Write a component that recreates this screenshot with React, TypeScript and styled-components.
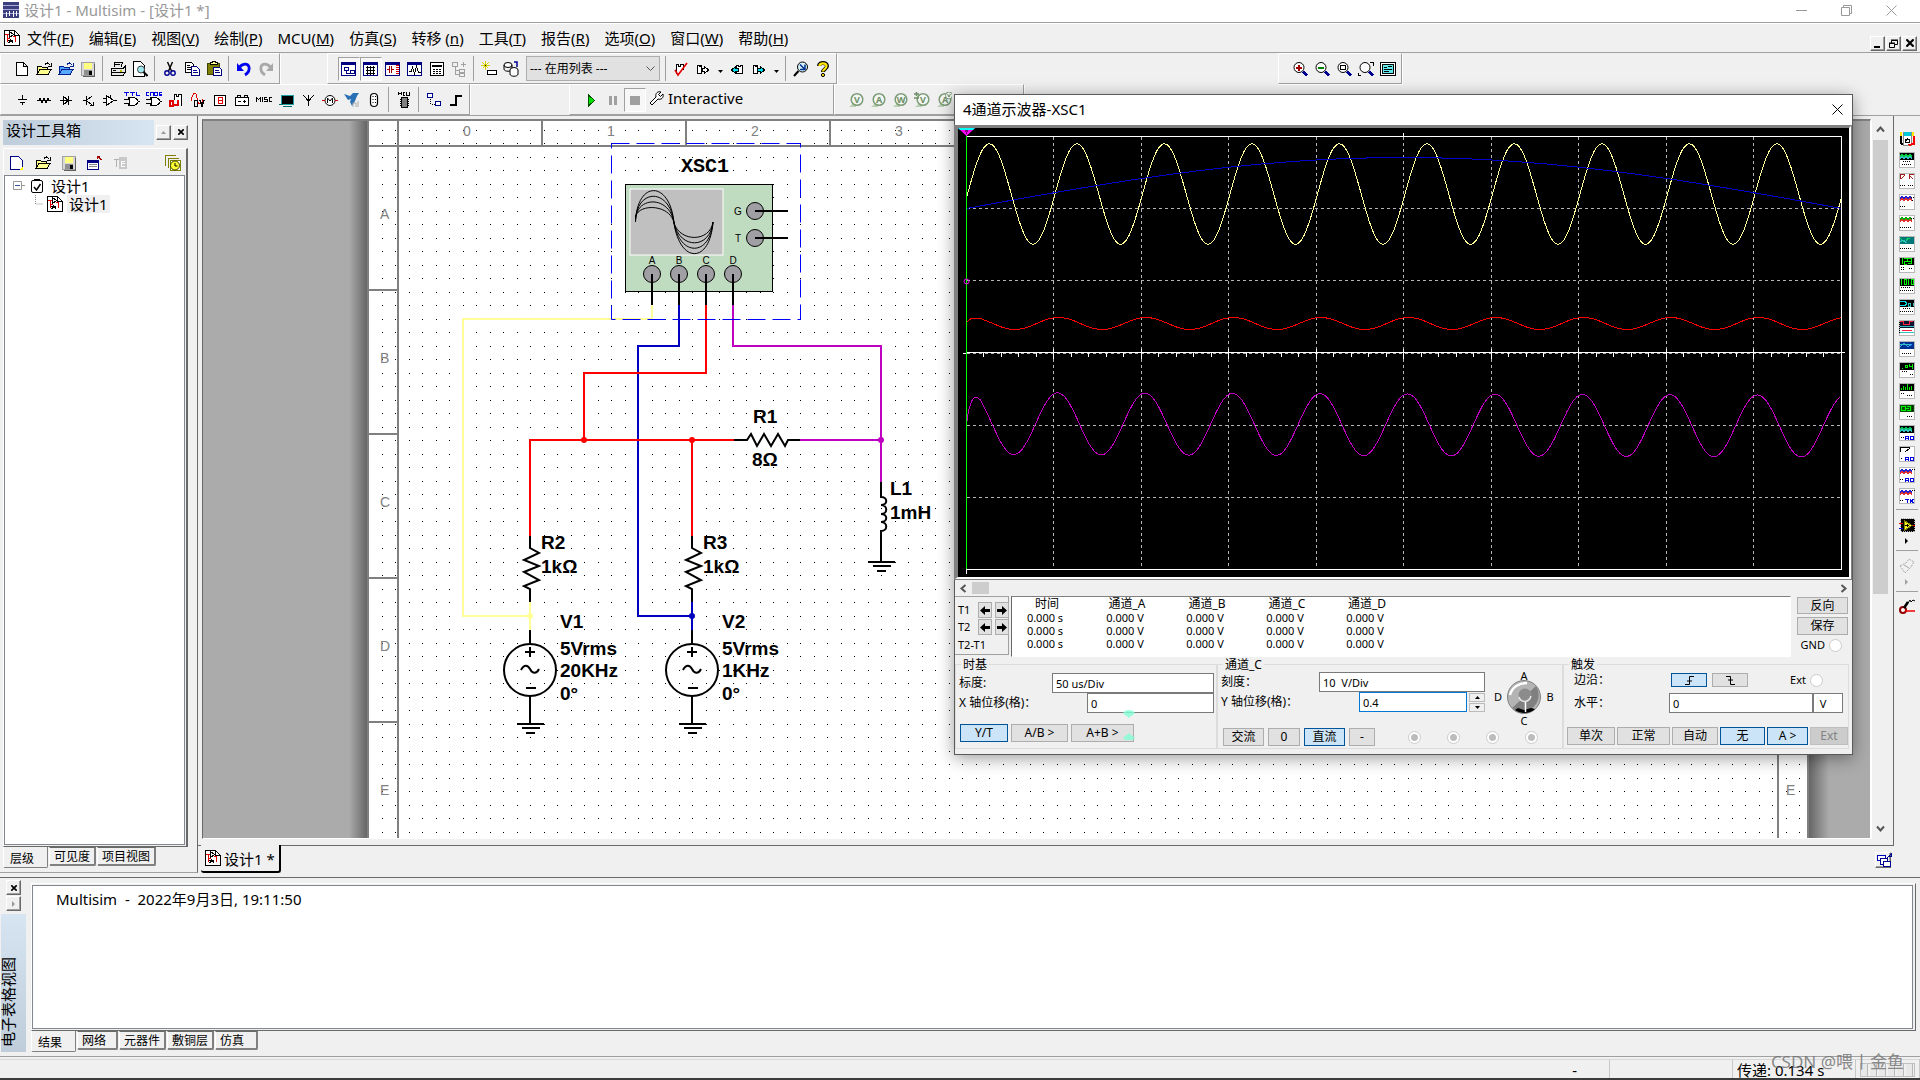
import React from "react";
import styled, { createGlobalStyle, css } from "styled-components";

const UI = `"Noto Sans", "Noto Sans CJK SC", sans-serif`;
const FACE = "#f0f0f0";

const Global = createGlobalStyle`
  * { box-sizing: border-box; }
  body { margin: 0; background: ${FACE}; font-family: ${UI}; font-size: 15px; color: #000; overflow: hidden; }
  button, input, select { font-family: inherit; color: inherit; margin: 0; }
  h1, h2 { margin: 0; font-weight: 400; }
`;

/* ---------- icons ---------- */

const P = ({ d, c = "#000", f = "none", w = 1 }: { d: string; c?: string; f?: string; w?: number }) => (
  <path d={d} stroke={c} fill={f} strokeWidth={w} />
);

const PixelSvg = styled.svg`
  display: block;
  flex: none;
  shape-rendering: crispEdges;
`;

const SmoothG = styled.g`
  shape-rendering: geometricPrecision;
`;

const folder = (fill: string, line: string) => (
  <>
    <P d="M1 13V5h4l1 1h5v3" c={line} f={fill} />
    <P d="M1 13.5L4 8.5h11l-3 5z" c={line} f={fill} />
    <P d="M9 3.5c2-3 4-1 4.500 1M15 2v3h-3" c={line} />
  </>
);
const lens = (
  <>
    <SmoothG><circle cx="7" cy="6.500" r="5" fill="#fff" stroke="#000" /></SmoothG>
    <P d="M11 10.500l4 4" c="#000090" w={2.5} />
  </>
);
const mdi = (inner: React.ReactNode) => (
  <>
    <rect x="0.500" y="1.500" width="14" height="13" fill="#fff" stroke="#000080" />
    <P d="M0 2.500h15" c="#000080" w={2} />
    {inner}
  </>
);
const design = (
  <>
    <P d="M.5.5h10l5 5v10H.5z" f="#fff" />
    <P d="M10.500.5v5h5" />
    <P d="M1 4.500h4M3.500 4v8M3 8.500h3M11.500 6v6M9 6.500h3" c="#e00000" />
    <P d="M5.500 1.500l4 3-4 3zM4 10.500h5M6 9l3 4M4 13l3-2" />
  </>
);
const gate = <P d="M4.500 5.500h4c4 0 5 2 6 4-1 2-2 4-6 4h-4c2-3 2-5 0-8zM0 7.500h5M0 11.500h5M14 9.500h2" f="#fff" />;
const probe = (s: string, extra?: React.ReactNode) => (
  <SmoothG>
    <path d="M1 15L8 15L8 9z" fill="#b9d0b2" />
    <circle cx="9" cy="7.500" r="5.800" fill="#f4f7f3" stroke="#7d9c78" strokeWidth="1.500" />
    <text x="9" y="11" textAnchor="middle" fontSize="9" fontWeight="700" fill="#6d8f68">{s}</text>
    {extra}
  </SmoothG>
);
const floppy = (
  <>
    <rect x="1.500" y="1.500" width="13" height="13" fill="#d8d8d8" stroke="#a0a0a0" />
    <rect x="4" y="2" width="8" height="6" fill="#ffff80" />
    <rect x="4" y="9" width="8" height="5" fill="#909090" />
    <rect x="9" y="10" width="3" height="4" fill="#000" />
    <P d="M14.500 3v12H3" c="#606060" />
  </>
);

const ICONS: Record<string, React.ReactNode> = {
  file: <P d="M2.500 1.500h7l4 4v9h-11zM9.500 1.500v4h4" f="#fff" />,
  newDesign: <><P d="M1.500 1.500h8l4 4v9h-12z" c="#000080" f="#fff" /><P d="M10 15l4-4v4z" c="none" f="#ffff00" /></>,
  open: folder("#ffff90", "#000"),
  samples: folder("#58a8ff", "#002090"),
  save: floppy,
  print: <><P d="M4.500 6V1.500h8L11 6M1 7.500h12l2-2v6l-2 3H1zM1 11.500h14" f="#e8e8e8" /><P d="M5 3.500h5M3 9.500h3" /><P d="M10 9.500h2" c="#c0c000" w={2} /></>,
  preview: <><P d="M1.500.5h7l4 4v11h-11z" f="#fff" /><SmoothG><circle cx="9" cy="8.500" r="3.500" fill="#9fe8f0" stroke="#444" /><path d="M11.500 11l4 4" stroke="#000" strokeWidth="2" /></SmoothG></>,
  cut: <SmoothG><path d="M5.500 1l4 9M10.500 1l-4 9" stroke="#000" strokeWidth="1.400" /><circle cx="5" cy="12" r="2.200" fill="none" stroke="#000090" strokeWidth="1.400" /><circle cx="11" cy="12" r="2.200" fill="none" stroke="#000090" strokeWidth="1.400" /></SmoothG>,
  copy: <><P d="M1.500 1.500h6l2 2v8h-8zM3 4.500h3M3 6.500h4M3 8.500h4" f="#fff" /><P d="M7.500 5.500h5l3 3v6h-8z" c="#000080" f="#fff" /><P d="M9 9.500h4M9 11.500h5" c="#000080" /></>,
  paste: <><rect x="1.500" y="2.500" width="12" height="11" fill="#808000" stroke="#404000" /><P d="M4 3.500h7v-2h-2V.5H6v1H4z" f="#ffff90" /><P d="M7.500 6.500h6l2 2v6h-8z" c="#000080" f="#fff" /><P d="M9 9.500h4M9 11.500h5" c="#000080" /></>,
  undo: <SmoothG><path d="M3 7C6 2 12 2 13 6s-1 6-4 8" fill="none" stroke="#0000f0" strokeWidth="2.800" /><path d="M1 2v8h7z" fill="#0000f0" /></SmoothG>,
  redo: <SmoothG><path d="M13 7C10 2 4 2 3 6s1 6 4 8" fill="none" stroke="#a8a8a8" strokeWidth="2.800" /><path d="M15 2v8H8z" fill="#a8a8a8" /></SmoothG>,
  toolbox: mdi(<P d="M3 6.500h4v3H3zM9 9.500h4v3H9zM5 10v2h4" c="#000080" />),
  sheet: mdi(<P d="M3 6.500h9M3 9.500h9M3 12.500h9M4.500 5v9M7.500 5v9M10.500 5v9" />),
  netlist: mdi(<><P d="M2 8.500h2M4.500 5v7M6.500 5v7M7 8.500h2" c="#a00000" /><path d="M12 4v10" stroke="#e00000" strokeWidth="3" strokeDasharray="1 1" /></>),
  grapher: mdi(<P d="M2 10.500h2l1.500-4 2 6 2-7 2 6h2" />),
  postproc: <><rect x="1.500" y="1.500" width="13" height="13" fill="#fff" stroke="#000" /><P d="M3 4.500h10" w={2} /><P d="M4 8.500h2M7 8.500h2M10 8.500h2M4 10.500h2M7 10.500h2M10 10.500h2M4 12.500h2M7 12.500h2M10 12.500h2" /></>,
  parent: <P d="M1.500 1.500h5v4h-5zM9.500 3.500h5M12 1v5M4 6v7h4M4 9.500h4M8.500 8.500h5v3h-5zM8.500 12.500h5v3h-5z" c="#a0a0a0" />,
  createComp: <><P d="M4.500 0v9M0 4.500h9M1.500 1.500l6 6M7.500 1.500l-6 6" c="#d8d000" /><P d="M4 4.500h1" /><rect x="6.500" y="9.500" width="9" height="4" fill="#fff" stroke="#000" /></>,
  database: <SmoothG><ellipse cx="5" cy="4" rx="4" ry="2.500" fill="#fff" stroke="#000" /><path d="M1 4v4c0 3 8 3 8 0V4" fill="none" stroke="#000" /><ellipse cx="11" cy="9" rx="4" ry="2.500" fill="#fff" stroke="#000" /><path d="M7 9v4c0 3 8 3 8 0V9" fill="#fff" stroke="#000" /><path d="M14 6V1h-3" fill="none" stroke="#000090" strokeWidth="1.500" /></SmoothG>,
  erc: <><P d="M3.500 13V3.500h2v2h2v-2h3V9" f="#fff" /><SmoothG><P d="M2 9l3 5 9-12" c="#e00000" w={1.6} /></SmoothG></>,
  toPcb: <P d="M2.500 12.500V4.500h2v1h1v-1h1v8zM7.500 7.500h2v-2l4 3.500-4 3.500v-2h-2z" f="#fff" />,
  backAnn: <><P d="M7.500 12.500V4.500h2v1h2v-1h2v8z" f="#fff" /><P d="M9.500 7.500h-3v-2l-4 3.500 4 3.500v-2h3z" f="#00e0e8" /></>,
  fwdAnn: <><P d="M2.500 12.500V4.500h2v1h1v-1h1v8z" f="#fff" /><P d="M6.500 7.500h3v-2l4 3.500-4 3.500v-2h-3z" f="#00e0e8" /></>,
  find: <SmoothG><circle cx="9.500" cy="6" r="5" fill="#d8f4f8" stroke="#000" /><path d="M7 3.500l5 5M12 3.500v5H7" stroke="#003090" strokeWidth="1.500" fill="none" /><path d="M5.500 10L1 15" stroke="#000" strokeWidth="2" /></SmoothG>,
  help: <SmoothG><path d="M4 5c0-4 8-4 8 0 0 3-4 3-4 6" fill="none" stroke="#000" strokeWidth="4" /><path d="M4.500 5c0-3.500 7-3.500 7 0 0 3-3.500 3-3.500 5.500" fill="none" stroke="#ffe800" strokeWidth="2.200" /><circle cx="8" cy="14" r="1.600" fill="#ffe800" stroke="#000" /></SmoothG>,
  zoomIn: <>{lens}<P d="M4 6.500h6M7 4v6" c="#a00000" w={2} /></>,
  zoomOut: <>{lens}<P d="M4 6.500h6" c="#008000" w={2} /></>,
  zoomArea: <>{lens}<P d="M4.500 4.500h5v4h-5z" /></>,
  zoomFit: <>{lens}<P d="M12 1.500h3.500V5M3 14.500H.5V12" /></>,
  fullScreen: <><rect x="0.500" y="1.500" width="15" height="13" fill="#fff" stroke="#000" /><rect x="2.500" y="3.500" width="11" height="9" fill="#60e8e8" stroke="#000" /><P d="M4 6.500h3M8 5.500h4M4 8.500h8M4 10.500h5" /></>,
  source: <P d="M8.500 3v5M4 7.500h9M6 10.500h5M8.500 10v3" />,
  resistor: <P d="M1 8.500h2l1-2 2 4 2-4 2 4 2-4 1 2h2" />,
  diode: <P d="M2 8.500h12M5.500 4.500v8l5-4zM10.500 4v9" f="#fff" />,
  transistor: <P d="M3 8.500h4M6.500 4v9M7 8l5-4M7 9l5 4M10 13h3v-3" />,
  analog: <P d="M4.500 3.500v10l7-5zM1 6.500h4M1 10.500h4M11 8.500h4M8.500 3v3" f="#fff" />,
  ttl: <>{gate}<P d="M0 .5h5M2.500 0v4M6 .5h5M8.500 0v4M12.500 0v4M12 3.500h4" c="#0000e0" /></>,
  cmos: <>{gate}<P d="M3 .5H.5v3H3M4.500 4V.5h3V4M8.500.5h3v3h-3zM15.500.5h-2v1.500h2v1.500h-3" c="#0000e0" /></>,
  miscDig: <><P d="M6.500 8V2.500h2v2h2v-2h3V14" f="#fff" /><P d="M1.500 8.500h3v5h-3zM5.500 13h3M10 8v6" c="#e00000" w={2} /></>,
  mixed: <><P d="M1 9C3-1 6-1 7 6s4 8 6 1" c="#e00000" /><P d="M4.500 8.500h3v6h-3zM10 8l2 6 2-6" w={1.5} /></>,
  indicator: <><rect x="2.500" y="3.500" width="11" height="10" fill="#fff" stroke="#000" /><P d="M6.500 5.500h4v6h-4zM6 8.500h5" c="#e00000" /></>,
  power: <><rect x="1.500" y="5.500" width="13" height="8" rx="1" fill="#fff" stroke="#000" /><P d="M3 5V3.500h3V5M10 5V3.500h3V5M4 9.500h3M9 9.500h3M10.500 8v3" /></>,
  misc: <P d="M.5 10V5.500l2 2 2-2V10M6.500 5v5M11 5.500H8.500v2H11v2H8M15.500 5.500h-2v4h2" />,
  advanced: <><rect x="3.500" y="3.500" width="12" height="9" fill="#000" stroke="#20a0a0" /><P d="M1 12.500h4M5 14.500h9" c="#007070" /></>,
  rf: <P d="M8.500 14V8M3 3l5.500 6L14 3M8.500 3v6" />,
  electroMech: <><SmoothG><circle cx="8" cy="8.500" r="5" fill="#fff" stroke="#000" /><path d="M5.500 11V6L8 9l2.500-3v5" fill="none" stroke="#000" /></SmoothG><P d="M0 8.500h3M13 8.500h3" c="#d00000" /></>,
  ni: <SmoothG><path d="M0 2l6 2 3-3h6l-2 3-2 5-3 5-2-4 1-3-3 1z" fill="#2b6fb5" /><path d="M9 15v-4h3v4M14 9v6" stroke="#aaa" fill="none" /></SmoothG>,
  connector: <SmoothG><rect x="4.500" y="1.500" width="7" height="13" rx="3.500" fill="#fff" stroke="#000" strokeWidth="1.200" /><path d="M7 4v9M9.500 4v9" stroke="#000" strokeDasharray="1 2" /></SmoothG>,
  mcu: <><P d="M2.500 3V.5l1.500 1 1.500-1V3M9 .5H7V3h2M10.500 0v3h3V0" /><rect x="5.500" y="5.500" width="6" height="10" fill="#808080" stroke="#000" /><path d="M4 7.500h9M4 9.500h9M4 11.500h9M4 13.500h9" stroke="#000" strokeDasharray="1 7" /></>,
  hierarchy: <><rect x="1.500" y="1.500" width="5" height="4" fill="#fff" stroke="#000090" /><rect x="9.500" y="9.500" width="5" height="4" fill="#fff" stroke="#000090" /><path d="M4.500 7v5h4" fill="none" stroke="#000" strokeDasharray="1 1" /></>,
  bus: <P d="M2 13h6V4h6" w={2} />,
  play: <P d="M5.500 3v11l6-5.500z" c="#005000" f="#00e000" />,
  pause: <P d="M5.500 4v9M10.500 4v9" c="#a0a0a0" w={3} />,
  stop: <rect x="3" y="4" width="10" height="9" fill="#a0a0a0" />,
  wrench: <SmoothG><path d="M1 14l6-6c-1-4 2-6 5-5L9.500 5.500l2 2L14 5c1 4-2 6-5 5l-6 6z" fill="#fff" stroke="#000" transform="translate(0 -1)" /></SmoothG>,
  probeV: probe("V"),
  probeA: probe("A"),
  probeW: probe("W"),
  probeDiff: probe("V", <path d="M0 2h5M2.500 0v4M0 6h5" stroke="#6d8f68" strokeWidth="1.500" />),
  probeAV: probe("A", <><circle cx="13" cy="3.500" r="3.500" fill="#f4f7f3" stroke="#7d9c78" /><path d="M11.500 2l1.500 3 1.500-3" fill="none" stroke="#6d8f68" /></>),
  rename: <><rect x="0.500" y="5.500" width="11" height="9" fill="#fff" stroke="#000080" /><P d="M0 6.500h12" c="#000080" w={2} /><P d="M2 9.500h8M2 11.500h8" c="#888" /><P d="M15 5l-4-3M10 4V1.500h3" c="#a00000" /></>,
  text: <><rect x="6" y="2" width="8" height="12" fill="#c8c8c8" /><P d="M1 4.500h5M3.500 4v8" c="#b0b0b0" w={1.500} /><P d="M8 8.500h4M12 6.500H8v5h4" c="#fff" /></>,
  history: <><P d="M.5 11V.5h10M3.500 13V3.500h10" c="#808000" /><P d="M5.500 15V5.500h10V15z" c="#808000" f="#fff" /><SmoothG><circle cx="10" cy="10.500" r="4.500" fill="#ffff30" stroke="#404000" /><path d="M10 8v3h2.500" fill="none" stroke="#000" /></SmoothG></>,
  design,
  project: <><SmoothG><rect x="2.500" y="2.500" width="11" height="12" rx="1.500" fill="#fff" stroke="#000" /></SmoothG><rect x="5" y="1" width="6" height="2" fill="#000" /><SmoothG><path d="M5 9l2.500 3L11.500 6" fill="none" stroke="#000" strokeWidth="1.500" /></SmoothG></>,
  app: <><rect x="0" y="0" width="16" height="16" fill="#3b3f80" /><P d="M0 3.500h16M0 7.500h16M0 11.500h16" c="#a8abd8" /><P d="M3.500 10v5M6.500 9v5M10.500 9v6M13.500 9v5" c="#fff" /></>,
  cascade: <><P d="M1.500 2.500h8v5h-8z" c="#0000c0" f="#fff" /><P d="M4.500 5.500h7v6h-7z" c="#000090" f="#fff" /><P d="M7.500 8.500h7v5h-7z" c="#000090" f="#fff" /><P d="M11 5l4-4M12 3h3V0" c="#000090" /></>,
  measure: <SmoothG><circle cx="4" cy="11" r="3" fill="#fff" stroke="#900000" strokeWidth="2" /><path d="M5 9l4-6" stroke="#000" strokeWidth="2.500" /><path d="M9 4l2-3 1 2 2-2 2 1" stroke="#000" fill="none" /><path d="M6 12h10" stroke="#f00000" strokeWidth="1.500" /></SmoothG>,
  labview: <><rect x="1.500" y="1.500" width="14" height="13" fill="#000" stroke="#aaa" strokeDasharray="1 1" /><P d="M0 11.500h4" c="#0000e0" /><P d="M0 6.500h4M13 8.500h3" c="#f00000" w={1.500} /><P d="M5 3.500v10l8-5z" c="#808000" f="#ffff20" /><P d="M6 8.500h4M8 7v3" /></>,
  component: <SmoothG><path d="M1 8l6-3 3-4 5 3-3 5-6 6-2-3z" fill="none" stroke="#a8a8a8" strokeDasharray="2 1" /><path d="M5 7l5 3" stroke="#a8a8a8" /></SmoothG>,
};

const Icon = ({ name }: { name: string }) => (
  <PixelSvg width="16" height="16" viewBox="0 0 16 16" aria-hidden="true">{ICONS[name]}</PixelSvg>
);

/* bench instruments: a small screen with a trace over a strip of terminals */
type Bench = { label: string; screen: string; trace: string; color: string; dots: string; second?: string; note?: string };
const zig = "M1 5l2-3 2 3 2-3 2 3 2-3 2 3";
const zig2 = "M1 7l2-3 2 3 2-3 2 3 2-3 2 3";
const AG = "M6.500 15v-4h3v4M6 13.500h4M14.500 11.500h-3v3h3v-2h-1";
const TK = "M6 11.500h4M8.500 11v4M11.500 11v4M15 11l-3 2 3 2";
const BENCH: Bench[] = [
  { label: "函数发生器", screen: "#000", trace: zig, color: "#00d040", second: zig2, dots: "M4 9.500h8M3 12.500h10" },
  { label: "瓦特计", screen: "#fff", trace: "M1 6V1h5M2 6l4-4M10 6V1h5M10 2l4 4", color: "#a02020", dots: "M1 12.500h5M9 12.500h5" },
  { label: "示波器", screen: "#fff", trace: zig, color: "#2020d0", second: zig2, dots: "M1 12.500h5M12 3h3M13 6h2" },
  { label: "4通道示波器", screen: "#fff", trace: zig, color: "#00b000", second: zig2, dots: "M1 12.500h12M12 3h3" },
  { label: "波特图仪", screen: "#007878", trace: "M1 2l3 3h3l2-3 2 1", color: "#00e060", second: "M1 6l3-2 4 3", dots: "M1 12.500h12" },
  { label: "频率计数器", screen: "#000", trace: "M3.500 1v6M5 1.500h3v3H5v3h3M9 1.500h3v5H9M9 4.500h3", color: "#00f000", dots: "M2 10.500h3M2 12.500h3M10 11.500h4" },
  { label: "字发生器", screen: "#000", trace: "M2.500 1v6M5 1.500h2v5H5zM9.500 1v6M12 1.500h2v5h-2z", color: "#00f000", dots: "M2 9.500h10M1 12.500h13" },
  { label: "逻辑变换器", screen: "#000", trace: "M1 2.500h4c3 0 3 4 0 4H1", color: "#00e0e8", second: "M9.500 4v3h2V4zM14 4v3", dots: "M4 9.500h7M1 12.500h13" },
  { label: "逻辑分析仪", screen: "#101030", trace: "M1 1.500h3v3h6v-3h4M3 10h10", color: "#ff2040", second: "M1 6h14M1 12h14", dots: "M0 2v12" },
  { label: "IV分析仪", screen: "#003090", trace: "M1 6l4-4 4 4 4-3", color: "#30a0ff", second: "M1 3h10", dots: "M3 12.500h9" },
  { label: "失真分析仪", screen: "#000", trace: "M3 6.500h1M6 3.500h2v2H6zM10.500 2v2h3M13.500 2v5", color: "#00f000", dots: "M3 9.500h6M11 12.500h3" },
  { label: "光谱分析仪", screen: "#000", trace: "M2.500 7V5M4.500 7V3M6.500 7V4M8.500 7V1M10.500 7V4M12.500 7V3", color: "#00f000", dots: "M2 10.500h4M8 12.500h6" },
  { label: "网络分析仪", screen: "#005000", trace: "M2 2.500h4v4H2zM6 4.500h4M8 2.500h3v4H8", color: "#00f000", dots: "M13 2v5M8 12.500h6" },
  { label: "安捷伦函数发生器", screen: "#000", trace: zig, color: "#00c060", second: zig2, dots: "M2 12.500h3", note: AG },
  { label: "安捷伦万用表", screen: "#fff", trace: "M1 1.500h10M1.500 1v5M6 6l5-4", color: "#000", dots: "M2 12.500h2", note: AG },
  { label: "安捷伦示波器", screen: "#fff", trace: zig, color: "#2020d0", second: zig2, dots: "M1 12.500h4M13 2h3", note: AG },
  { label: "泰克示波器", screen: "#fff", trace: zig, color: "#2020d0", second: zig2, dots: "M1 12.500h4M13 2h3", note: TK },
];

const BenchIcon = ({ b }: { b: Bench }) => (
  <PixelSvg width="16" height="16" viewBox="0 0 16 16" aria-hidden="true">
    <rect x="0.500" y="0.500" width="15" height="15" fill="#fff" stroke="#b8b8b8" />
    <rect x="1" y="1" width="14" height="7" fill={b.screen} />
    <P d={b.trace} c={b.color} />
    {b.second && <P d={b.second} c={b.screen === "#fff" ? "#e03030" : "#30c0c0"} />}
    <path d={b.dots} stroke="#000" strokeDasharray="1 1" fill="none" />
    {b.note && <P d={b.note} c="#0000e0" />}
  </PixelSvg>
);

/* ---------- frame ---------- */

const App_ = styled.div`
  display: flex;
  flex-direction: column;
  height: 100vh;
  background: ${FACE};
`;

const TitleBar = styled.header`
  display: flex;
  align-items: center;
  justify-content: space-between;
  flex: none;
  height: 23px;
  padding: 0 20px 2px 3px;
  background: #fff;
  border-bottom: 1px solid #a0a0a0;
  color: #999;
`;

const Caption = styled.h1`
  display: flex;
  align-items: center;
  gap: 5px;
  font-size: 15px;
  line-height: 20px;
`;

const CaptionButtons = styled.div`
  display: flex;
  gap: 28px;
`;

const CaptionButton = styled.button`
  display: grid;
  place-items: center;
  width: 17px;
  height: 17px;
  padding: 0;
  border: 0;
  background: none;
`;

const MenuBar = styled.nav`
  display: flex;
  align-items: center;
  flex: none;
  height: 30px;
  padding: 0 3px 0 4px;
  border-top: 1px solid #fff;
  border-bottom: 1px solid #a0a0a0;
`;

const MenuList = styled.div`
  display: flex;
  flex: 1;
  gap: 15px;
  padding-left: 7px;
`;

const MenuItem = styled.button`
  padding: 0;
  border: 0;
  background: none;
  font-size: 15px;
  line-height: 22px;
  white-space: pre;
`;

const bevel = css`
  border: 1px solid;
  border-color: #fff #696969 #696969 #fff;
  box-shadow: inset -1px -1px 0 #a0a0a0;
`;

const BevelButton = styled.button<{ $size?: number }>`
  display: grid;
  place-items: center;
  width: ${(p) => p.$size ?? 15}px;
  height: ${(p) => p.$size ?? 15}px;
  padding: 0;
  background: ${FACE};
  ${bevel}
`;

const ChildButtons = styled.div`
  display: flex;
  gap: 1px;
  padding-top: 10px;
`;

const ToolRow = styled.div`
  display: flex;
  flex: none;
  height: 31px;
`;

const Bar = styled.div<{ $w?: number }>`
  display: flex;
  align-items: center;
  flex: none;
  width: ${(p) => (p.$w ? `${p.$w}px` : "auto")};
  padding: 0 1px 0 10px;
  border: 1px solid;
  border-color: #fff #a0a0a0 #a0a0a0 #fff;
  box-shadow: 1px 1px 0 #fff;
`;

const Gap = styled.div<{ $w?: number }>`
  flex: ${(p) => (p.$w ? `0 0 ${p.$w}px` : "1")};
`;

const IconButton = styled.button<{ $pressed?: boolean }>`
  display: grid;
  place-items: center;
  flex: none;
  width: 22px;
  height: 24px;
  padding: 0;
  background: ${(p) => (p.$pressed ? "#f7f7f7" : "none")};
  border: 1px solid;
  border-color: ${(p) => (p.$pressed ? "#a0a0a0 #fff #fff #a0a0a0" : "transparent")};
`;

const CaretButton = styled.button`
  width: 12px;
  height: 24px;
  padding: 0;
  border: 0;
  background: none;
`;

const Divider = styled.span`
  flex: none;
  width: 8px;
  height: 25px;
  border-left: 1px solid #a0a0a0;
  margin-left: 3px;
  margin-right: -3px;
`;

const InUseSelect = styled.select`
  width: 134px;
  height: 25px;
  margin: 0 2px 0 4px;
  padding: 0 3px;
  border: 1px solid #adadad;
  border-radius: 0;
  background: #e1e1e1 url("data:image/svg+xml,%3Csvg xmlns='http://www.w3.org/2000/svg' width='9' height='6'%3E%3Cpath d='M0.5 0.5l4 4 4-4' fill='none' stroke='%23555'/%3E%3C/svg%3E") no-repeat right 4px center;
  appearance: none;
  font-size: 12px;
`;

const Interactive = styled.button`
  display: flex;
  align-items: center;
  gap: 3px;
  padding: 0 0 4px 3px;
  border: 0;
  background: none;
  font-size: 15px;
  line-height: 20px;
`;

const Caret = () => (
  <svg width="7" height="4" viewBox="0 0 7 4" aria-hidden="true"><path d="M1 0h5L3.500 3z" /></svg>
);

const Tools = ({ names, pressed = [] }: { names: string[]; pressed?: string[] }) => (
  <>
    {names.map((n, i) =>
      n === "|" ? <Divider key={i} /> : (
        <IconButton key={i} aria-label={n} $pressed={pressed.includes(n)}><Icon name={n} /></IconButton>
      ),
    )}
  </>
);

/* ---------- left panel ---------- */

const Middle = styled.div`
  display: flex;
  flex: 1;
  min-height: 0;
  border-top: 1px solid #a0a0a0;
`;

const SidePanel = styled.aside`
  display: flex;
  flex-direction: column;
  flex: none;
  width: 198px;
  padding: 3px 5px 0 3px;
  margin-bottom: 4px;
  border-right: 1px solid #696969;
  border-bottom: 1px solid #a0a0a0;
`;

const SideHead = styled.div`
  display: flex;
  align-items: center;
  gap: 2px;
  height: 26px;
`;

const SideTitle = styled.h2`
  width: 151px;
  height: 25px;
  padding-left: 3px;
  background: linear-gradient(90deg, #bfcddb, #d7e4f2);
  font-size: 15px;
  line-height: 21px;
`;

const SideBox = styled.div`
  display: flex;
  flex-direction: column;
  flex: 1;
  width: 185px;
  margin-top: 3px;
  border: 1px solid;
  border-color: #fff #696969 #696969 #fff;
  border-right-width: 2px;
`;

const SideTools = styled.div`
  display: flex;
  align-items: center;
  gap: 4px;
  height: 26px;
  padding: 2px 2px 0 2px;
`;

const Tree = styled.div`
  flex: 1;
  margin: 0 1px 1px 0;
  padding-top: 1px;
  border: 1px solid #828790;
  background: #fff;
`;

const TreeRow = styled.div<{ $level: number }>`
  display: flex;
  align-items: center;
  gap: 4px;
  height: 18px;
  padding-left: ${(p) => p.$level * 17 + 8}px;
  font-size: 15px;
`;

const TreeLabel = styled.span<{ $on?: boolean }>`
  padding: 0 2px;
  line-height: 18px;
  background: ${(p) => (p.$on ? "#f0f0f0" : "none")};
`;

const Tabs = styled.div`
  display: flex;
  align-items: flex-start;
  flex: none;
  height: 25px;
`;

const Tab = styled.button<{ $on?: boolean; $pad?: number }>`
  height: ${(p) => (p.$on ? 21 : 19)}px;
  padding: 1px ${(p) => (p.$pad ?? 4)}px 0 4px;
  margin-right: 1px;
  font-size: 12px;
  line-height: 15px;
  background: ${FACE};
  border: 1px solid;
  border-width: ${(p) => (p.$on ? "0 1px 1px 1px" : "1px 2px 2px 1px")};
  border-color: ${(p) => (p.$on ? FACE : "#696969")} #808080 #808080 #fff;
  border-radius: 0 0 2px 2px;
  ${(p) => p.$on && "padding: 3px 13px 0 6px;"}
`;

/* ---------- workspace ---------- */

const Workspace = styled.main`
  display: flex;
  flex-direction: column;
  flex: 1;
  min-width: 0;
`;

const CanvasFrame = styled.div`
  display: flex;
  flex: 1;
  min-height: 0;
  padding: 3px 5px 6px 4px;
  border-right: 1px solid #696969;
  border-bottom: 1px solid #696969;
`;

const Canvas = styled.div`
  display: flex;
  flex: 1;
  min-width: 0;
  overflow: hidden;
  border: 1px solid;
  border-width: 2px 1px 1px 1px;
  border-color: #808080 #fff #fff #696969;
  background: #ababab;
`;

const Gutter = styled.div<{ $side: "left" | "right" }>`
  ${(p) => p.$side === "left"
    ? css`flex: 0 0 166px; border-right: 2px solid #808080; background: linear-gradient(90deg, #ababab 146px, #666 164px);`
    : css`flex: 1; border-left: 2px solid #808080; background: linear-gradient(90deg, #666, #ababab 20px);`}
`;

const Sheet = styled.svg`
  display: block;
  flex: none;
  background: #fff;
`;

const ScrollTrack = styled.div`
  display: flex;
  flex-direction: column;
  align-items: center;
  flex: none;
  width: 17px;
  background: ${FACE};
  border-left: 1px solid #fff;
`;

const ScrollButton = styled.button`
  display: grid;
  place-items: center;
  flex: none;
  width: 16px;
  height: 21px;
  padding: 0;
  border: 0;
  background: ${FACE};
`;

const ScrollThumb = styled.div`
  flex: 0 0 63%;
  width: 15px;
  background: #cdcdcd;
`;

const Chevron = ({ r }: { r: number }) => (
  <svg width="9" height="9" viewBox="0 0 9 9" aria-hidden="true">
    <path d="M1 6.500l3.500-4 3.500 4" fill="none" stroke="#555" strokeWidth="2" transform={`rotate(${r} 4.500 4.500)`} />
  </svg>
);

const DocTabs = styled.div`
  display: flex;
  justify-content: space-between;
  align-items: flex-start;
  height: 31px;
  padding: 0 3px 0 3px;
`;

const DocTab = styled.button`
  display: flex;
  align-items: center;
  gap: 3px;
  height: 28px;
  margin-top: -1px;
  padding: 0 4px;
  background: ${FACE};
  border: solid #000;
  border-width: 0 2px 2px 0;
  border-radius: 0 0 3px 3px;
  font-size: 15px;
  white-space: pre;
`;

const CascadeWrap = styled.div`
  padding-top: 6px;
`;

const InstrumentBar = styled.aside`
  display: flex;
  flex-direction: column;
  align-items: center;
  flex: none;
  width: 26px;
  padding-top: 12px;
`;

const BenchButton = styled.button<{ $h?: number }>`
  display: grid;
  place-items: center;
  width: 22px;
  height: ${(p) => p.$h ?? 21}px;
  padding: 0;
  border: 0;
  background: none;
`;

const BenchRule = styled.hr`
  width: 22px;
  margin: 3px 0 4px;
  border: 0;
  border-top: 1px solid #a0a0a0;
`;

/* schematic parts */

const Label = styled.text`
  font: 700 19px "Liberation Sans", sans-serif;
`;
const RulerText = styled.text`
  font: 14px "Liberation Sans", sans-serif;
  fill: #808080;
`;
const PinText = styled.text`
  font: 10px "Liberation Sans", sans-serif;
  text-anchor: middle;
`;
const XscText = styled.text`
  font: 700 20px "Liberation Mono", monospace;
`;

const Wire = ({ d, c }: { d: string; c: string }) => <path d={d} stroke={c} strokeWidth="2" fill="none" />;
const Node = ({ x, y, c }: { x: number; y: number; c: string }) => <circle cx={x} cy={y} r="3" fill={c} />;

const Ground = ({ x, y }: { x: number; y: number }) => (
  <path d={`M${x - 13} ${y}h27M${x - 8} ${y + 4}h18M${x - 4} ${y + 9}h9`} stroke="#000" strokeWidth="2" />
);

const Branch = ({ x, r, v, freq }: { x: number; r: string; v: string; freq: string }) => (
  <g stroke="#000" strokeWidth="2" fill="none">
    <path d={`M${x} 536v12l9 5-15 7 15 6-15 6 15 8-15 6 6 3v13`} />
    <path d={`M${x} 630v13M${x} 696v28`} />
    <circle cx={x} cy="670" r="26" />
    <path d={`M${x - 5} 652h10M${x} 647v10M${x - 4} 688h10`} />
    <path d={`M${x - 9} 670c3-6 7-5 9-1s6 6 9 0`} />
    <Ground x={x} y={724} />
    <g stroke="none" fill="#000">
      <Label x={x + 11} y="549">{r}</Label>
      <Label x={x + 11} y="573">1kΩ</Label>
      <Label x={x + 30} y="628">{v}</Label>
      <Label x={x + 30} y="655">5Vrms</Label>
      <Label x={x + 30} y="677">{freq}</Label>
      <Label x={x + 30} y="700">0°</Label>
    </g>
  </g>
);

const YELLOW = "#ffff99";
const BLUE = "#0000c0";
const RED = "#ff0000";
const PURPLE = "#c000c0";

const Schematic = () => (
  <Sheet width="1438" height="1000" viewBox="369 121 1438 1000" role="img" aria-label="电路原理图">
    <defs>
      <pattern id="dots" x="382" y="130" width="27" height="27" patternUnits="userSpaceOnUse">
        <path d="M0 .5h1M13 .5h1M0 13.500h1M13 13.500h1" stroke="#000" shapeRendering="crispEdges" />
      </pattern>
    </defs>
    <rect x="381" y="128" width="1420" height="990" fill="url(#dots)" />
    <g fill="#808080">
      <rect x="397" y="121" width="2" height="1000" />
      <rect x="1777" y="121" width="2" height="1000" />
      <rect x="369" y="145" width="1438" height="2" />
      {[1, 2, 3, 4, 5, 6, 7, 8, 9].map((i) => <rect key={i} x={397 + i * 144} y="121" width="2" height="24" />)}
      {[1, 2, 3, 4, 5].map((i) => (
        <React.Fragment key={i}>
          <rect x="369" y={145 + i * 144} width="29" height="2" />
          <rect x="1778" y={145 + i * 144} width="29" height="2" />
        </React.Fragment>
      ))}
    </g>
    {["0", "1", "2", "3"].map((t, i) => <RulerText key={t} x={463 + i * 144} y="136">{t}</RulerText>)}
    {["A", "B", "C", "D", "E"].map((t, i) => (
      <React.Fragment key={t}>
        <RulerText x="380" y={219 + i * 144}>{t}</RulerText>
        <RulerText x="1786" y={219 + i * 144}>{t}</RulerText>
      </React.Fragment>
    ))}

    <Wire d="M652 304v15H463v297h67M530 602v28" c={YELLOW} />
    <Wire d="M679 304v42h-41v270h54M692 602v28" c={BLUE} />
    <Wire d="M706 304v69H584v67M734 440H530v96M692 440v96" c={RED} />
    <Wire d="M733 304v42h148v136M800 440h81" c={PURPLE} />
    <Node x={530} y={616} c={YELLOW} />
    <Node x={692} y={616} c={BLUE} />
    <Node x={584} y={440} c={RED} />
    <Node x={692} y={440} c={RED} />
    <Node x={881} y={440} c={PURPLE} />

    <rect x="611.500" y="143.500" width="189" height="176" fill="none" stroke="#0000ff" strokeDasharray="18 7" />
    <XscText x="681" y="172">XSC1</XscText>
    <rect x="625.500" y="184.500" width="147" height="107" fill="#c0dcc0" stroke="#000" />
    <rect x="630" y="189" width="93" height="66" fill="#c0c0c0" stroke="#fff" />
    <g fill="none" stroke="#000">
      {[0, 6, 12, 18].map((k) => (
        <path key={k} d={`M635.500 ${222 - k / 4}C637 ${180 + k * 1.300} 670 ${180 + k * 1.300} 674 ${223}C680 ${264 - k * 1.200} 710 ${264 - k * 1.200} 713 ${222}`} />
      ))}
    </g>
    {[["G", 211], ["T", 238]].map(([t, y]) => (
      <g key={t}>
        <PinText x="738" y={Number(y) + 4}>{t}</PinText>
        <circle cx="755" cy={y} r="8.500" fill="#a0a0a4" stroke="#000" />
        <path d={`M755 ${y}h33`} stroke="#000" strokeWidth="2" />
      </g>
    ))}
    {["A", "B", "C", "D"].map((t, i) => (
      <g key={t}>
        <PinText x={652 + i * 27} y="264">{t}</PinText>
        <circle cx={652 + i * 27} cy="274" r="8.500" fill="#a0a0a4" stroke="#000" />
        <path d={`M${652 + i * 27} 274v31`} stroke="#000" strokeWidth="2" />
      </g>
    ))}

    <path d="M734 440h13l4-6 6 12 7-12 7 12 7-12 7 12 3-6h12" fill="none" stroke="#000" strokeWidth="2" />
    <Label x="753" y="423">R1</Label>
    <Label x="752" y="466">8Ω</Label>
    <path d="M881 482v15c7 0 7 8 0 8 7 0 7 9 0 9 7 0 7 8 0 8 7 0 7 9 0 9v31" fill="none" stroke="#000" strokeWidth="2" />
    <Ground x={881} y={562} />
    <Label x="890" y="495">L1</Label>
    <Label x="890" y="519">1mH</Label>
    <Branch x={530} r="R2" v="V1" freq="20KHz" />
    <Branch x={692} r="R3" v="V2" freq="1KHz" />
  </Sheet>
);

/* ---------- oscilloscope ---------- */

const Dialog = styled.section`
  position: absolute;
  left: 954px;
  top: 94px;
  display: flex;
  flex-direction: column;
  width: 899px;
  background: ${FACE};
  border: 1px solid #5a5a5a;
  box-shadow: 0 3px 16px rgba(0, 0, 0, 0.4);
  font-size: 12px;
`;

const DialogHead = styled.div`
  display: flex;
  align-items: center;
  justify-content: space-between;
  height: 30px;
  padding: 0 6px 2px 8px;
  background: #fff;
`;

const DialogTitle = styled.h2`
  font-size: 15px;
  line-height: 24px;
`;

const ScreenFrame = styled.div`
  border: solid;
  border-width: 2px 2px 2px 3px;
  border-color: #808080 #fff #fff #808080;
  outline: 1px solid #808080;
  margin: 1px 1px 1px 0;
  background: #000;
`;

const Trace = styled.svg`
  display: block;
`;

const HScroll = styled.div`
  display: flex;
  align-items: center;
  height: 16px;
`;

const HThumb = styled.div`
  width: 17px;
  height: 12px;
  background: #cdcdcd;
`;

const HScrollButton = styled.button`
  display: grid;
  place-items: center;
  width: 17px;
  height: 16px;
  padding: 0;
  border: 0;
  background: none;
`;

const ReadoutRow = styled.div`
  display: flex;
  height: 61px;
`;

const Cursors = styled.div`
  display: grid;
  grid-template-columns: 17px 14px 14px;
  grid-template-rows: 16px 16px 18px;
  align-content: start;
  align-items: center;
  gap: 1px 3px;
  width: 54px;
  height: 59px;
  padding: 5px 0 0 3px;
  border: 1px solid #a0a0a0;
  border-left: 0;
  font-size: 11px;
`;

const CursorName = styled.span<{ $wide?: boolean }>`
  grid-column: ${(p) => (p.$wide ? "1 / -1" : "auto")};
  line-height: 16px;
`;

const ReadoutBox = styled.div`
  flex: 1;
  margin-left: 2px;
  background: #fff;
  border: 1px solid;
  border-color: #808080 #fff #fff #696969;
`;

const Readout = styled.table`
  border-collapse: collapse;
  table-layout: fixed;
  width: 400px;
  font-size: 11px;
  line-height: 13px;
  th { font-size: 12px; font-weight: 400; padding: 0 10px 0 0; line-height: 14px; }
  td { padding: 0 14px 0 0; text-align: center; }
`;

const SideActions = styled.div`
  display: flex;
  flex-direction: column;
  gap: 3px;
  width: 61px;
  padding: 1px 5px 0 6px;
`;

const FlatButton = styled.button<{ $on?: boolean; $w: number; $h?: number }>`
  display: grid;
  place-items: center;
  flex: none;
  width: ${(p) => p.$w}px;
  height: ${(p) => p.$h ?? 18}px;
  padding: 0;
  font-size: 12px;
  line-height: 14px;
  background: ${(p) => (p.$on ? "#cce4f7" : "#e1e1e1")};
  border: 1px solid ${(p) => (p.$on ? "#005499" : "#adadad")};
  &:disabled { background: #ccc; border-color: #bfbfbf; color: #838383; }
`;

const RadioLabel = styled.label`
  display: flex;
  align-items: center;
  justify-content: flex-end;
  gap: 4px;
  padding-right: 5px;
  font-size: 11px;
  line-height: 14px;
`;

const Radio = styled.input<{ $dot?: boolean }>`
  appearance: none;
  flex: none;
  width: 13px;
  height: 13px;
  border: 1px solid #ccc;
  border-radius: 50%;
  background: ${(p) => (p.$dot ? "radial-gradient(#bcbcbc 0 3px, #fff 4px)" : "#fff")};
`;

const Groups = styled.div`
  display: grid;
  grid-template-columns: 262px 346px 1fr;
  height: 97px;
  padding: 0 3px 5px 0;
`;

const Group = styled.fieldset`
  display: flex;
  flex-direction: column;
  min-width: 0;
  margin: 0;
  padding: 0 2px 0 3px;
  border: 1px solid #dcdcdc;
`;

const Legend = styled.legend`
  margin-left: 2px;
  padding: 0 2px;
  font-size: 12px;
  line-height: 15px;
`;

const Row = styled.div<{ $h?: number; $top?: number; $gap?: number; $left?: number }>`
  display: flex;
  align-items: center;
  gap: ${(p) => p.$gap ?? 3}px;
  height: ${(p) => p.$h ?? 20}px;
  margin-top: ${(p) => p.$top ?? 0}px;
  padding-left: ${(p) => p.$left ?? 0}px;
`;

const FieldLabel = styled.label`
  flex: 1;
  font-size: 12px;
  line-height: 16px;
  white-space: pre;
`;

const Field = styled.input<{ $w: number; $focus?: boolean }>`
  width: ${(p) => p.$w}px;
  height: 20px;
  padding: 0 3px;
  border: 1px solid ${(p) => (p.$focus ? "#0078d7" : "#7a7a7a")};
  background: #fff;
  font-size: 11px;
  outline: 0;
`;

const ChannelTop = styled.div`
  display: flex;
  height: 40px;
`;

const ChannelFields = styled.div`
  flex: none;
  width: 264px;
`;

const Spinner = styled.div`
  display: flex;
  flex-direction: column;
  gap: 1px;
`;

const SpinButton = styled.button`
  display: grid;
  place-items: center;
  width: 16px;
  height: 9px;
  padding: 0;
  border: 1px solid #bbb;
  background: ${FACE};
`;

const Dial = styled.div`
  display: grid;
  grid-template-columns: 16px 36px 16px;
  grid-template-rows: 8px 34px 14px;
  place-items: center;
  height: 56px;
  margin-left: 5px;
  font-size: 11px;
  line-height: 12px;
`;

const DialCell = styled.span<{ $col: number; $row: number }>`
  display: block;
  grid-column: ${(p) => p.$col};
  grid-row: ${(p) => p.$row};
`;

const Radios = styled.div`
  display: flex;
  gap: 26px;
  padding-left: 29px;
`;

const CursorMark = styled.svg`
  position: absolute;
  left: 168px;
  bottom: 14px;
`;

const DIV_X = 87.5;
const DIV_Y = 72.2;
const X0 = 8.5;
const Y0 = 8.5;

const sampled = (f: (x: number) => number, from = 0) => {
  const pts: string[] = [];
  for (let x = from; x <= 875; x += 2.5) pts.push(`${(X0 + x).toFixed(1)},${f(x).toFixed(1)}`);
  return pts.join(" ");
};

const chA = sampled((x) => 66 - 50.3 * Math.sin((2 * Math.PI * (x - 1)) / DIV_X));
const chB = sampled((x) => 80.5 - 51 * Math.sin((Math.PI * x) / 875));
const chC = `${X0},194 ${X0 + 4},191 ${X0 + 8},190.500 ${X0 + 14},190.500 ` +
  sampled((x) => 195.5 - 6 * Math.cos((2 * Math.PI * (x - 92)) / DIV_X), 20);
const chD = `${X0},297 ${X0 + 2},283 ${X0 + 5},273 ${X0 + 8},269.500 ${X0 + 11},269.500 ${X0 + 14},272 ` +
  sampled((x) => 295.5 + x / 330 - 31 * Math.cos((2 * Math.PI * (x - 91)) / DIV_X), 18);

const ScopeScreen = () => {
  const right = X0 + 875;
  const mid = 224.5;
  return (
    <Trace width="891" height="449" viewBox="0 0 891 449" role="img" aria-label="示波器波形">
      <g stroke="#b4b4b4" strokeDasharray="3 3" shapeRendering="crispEdges">
        {[1, 2, 3, 4, 5, 6, 7, 8, 9].map((i) => (
          <path key={i} d={`M${Math.floor(X0 + i * DIV_X - 0.5) + 0.5} ${Y0}V441`} />
        ))}
        {[1, 2, 4, 5].map((i) => <path key={i} d={`M${X0} ${Math.floor(Y0 + i * DIV_Y) + 0.5}H${right}`} />)}
      </g>
      <g stroke="#fff" fill="none" shapeRendering="crispEdges">
        <path d={`M${X0} ${Y0}H${right}V441.500H${X0}v4`} />
        <path d={`M5 ${mid + 1}h4M${X0} ${mid}H${right + 3}`} />
        <path d={`M${X0} ${mid + 1}H${right}`} stroke="#b4b4b4" strokeDasharray="3 3" />
        <path d="M445.500 5v4" />
        {Array.from({ length: 50 }, (_, i) => (
          <path key={i} d={`M${Math.floor(X0 + (i + 1) * 17.5 - 0.5) + 0.5} ${(i + 1) % 5 ? mid - 1 : mid - 4}v${(i + 1) % 5 ? 5 : 10}`} />
        ))}
      </g>
      <g fill="none" shapeRendering="crispEdges">
        <polyline points={chA} stroke="#ffff99" />
        <polyline points={chB} stroke="#0000c8" />
        <polyline points={chC} stroke="#ff0000" />
        <polyline points={chD} stroke="#c000c0" />
      </g>
      <path d={`M${X0} 7V441`} stroke="#00ff00" shapeRendering="crispEdges" />
      <path d="M0 0h17l-8.500 8z" fill="#ff00ff" />
      <path d="M0 0h17l-2 2H2z" fill="#00ffff" />
      <path d="M7 3h3M8 5h1" stroke="#000" />
      <circle cx={X0} cy="153.500" r="2.500" fill="none" stroke="#ff00ff" />
    </Trace>
  );
};

const Arrow = ({ flip }: { flip?: boolean }) => (
  <svg width="10" height="9" viewBox="0 0 10 9" aria-hidden="true">
    <path d="M0 4.500L5 0v3h5v3H5v3z" transform={flip ? "rotate(180 5 4.500)" : undefined} />
  </svg>
);

const Cross = ({ s = 11, w = 1, c = "#000" }: { s?: number; w?: number; c?: string }) => (
  <svg width={s} height={s} viewBox="0 0 11 11" aria-hidden="true"><path d="M.5.5l10 10M10.500.5l-10 10" stroke={c} strokeWidth={w} /></svg>
);

const Oscilloscope = () => (
  <Dialog aria-label="4通道示波器-XSC1">
    <DialogHead>
      <DialogTitle>4通道示波器-XSC1</DialogTitle>
      <CaptionButton aria-label="关闭"><Cross /></CaptionButton>
    </DialogHead>
    <ScreenFrame><ScopeScreen /></ScreenFrame>
    <HScroll>
      <HScrollButton aria-label="向左"><Chevron r={-90} /></HScrollButton>
      <HThumb />
      <Gap />
      <HScrollButton aria-label="向右"><Chevron r={90} /></HScrollButton>
    </HScroll>
    <ReadoutRow>
      <Cursors>
        {["T1", "T2"].map((t) => (
          <React.Fragment key={t}>
            <CursorName>{t}</CursorName>
            <FlatButton $w={14} $h={16} aria-label={`${t} 左移`}><Arrow /></FlatButton>
            <FlatButton $w={14} $h={16} aria-label={`${t} 右移`}><Arrow flip /></FlatButton>
          </React.Fragment>
        ))}
        <CursorName $wide>T2-T1</CursorName>
      </Cursors>
      <ReadoutBox>
        <Readout>
          <thead>
            <tr>{["时间", "通道_A", "通道_B", "通道_C", "通道_D"].map((h) => <th key={h} scope="col">{h}</th>)}</tr>
          </thead>
          <tbody>
            {[0, 1, 2].map((r) => (
              <tr key={r}>
                <td>0.000 s</td><td>0.000 V</td><td>0.000 V</td><td>0.000 V</td><td>0.000 V</td>
              </tr>
            ))}
          </tbody>
        </Readout>
      </ReadoutBox>
      <SideActions>
        <FlatButton $w={51} $h={17}>反向</FlatButton>
        <FlatButton $w={51}>保存</FlatButton>
        <RadioLabel>GND<Radio type="radio" name="gnd" /></RadioLabel>
      </SideActions>
    </ReadoutRow>
    <Groups>
      <Group>
        <Legend>时基</Legend>
        <Row $top={1}>
          <FieldLabel htmlFor="tb-scale">标度:</FieldLabel>
          <Field id="tb-scale" $w={162} defaultValue="50 us/Div" />
        </Row>
        <Row>
          <FieldLabel htmlFor="tb-x">X 轴位移(格)：</FieldLabel>
          <Field id="tb-x" $w={127} defaultValue="0" />
        </Row>
        <Row $top={10} $left={1}>
          <FlatButton $w={48} $on>Y/T</FlatButton>
          <FlatButton $w={57}>A/B &gt;</FlatButton>
          <FlatButton $w={63}>A+B &gt;</FlatButton>
        </Row>
      </Group>
      <Group>
        <Legend>通道_C</Legend>
        <ChannelTop>
          <ChannelFields>
            <Row>
              <FieldLabel htmlFor="ch-scale">刻度：</FieldLabel>
              <Field id="ch-scale" $w={166} defaultValue="10  V/Div" />
            </Row>
            <Row $gap={2}>
              <FieldLabel htmlFor="ch-y">Y 轴位移(格)：</FieldLabel>
              <Field id="ch-y" $w={108} $focus defaultValue="0.4" />
              <Spinner>
                <SpinButton aria-label="增大"><svg width="5" height="3"><path d="M0 3l2.500-3L5 3z" /></svg></SpinButton>
                <SpinButton aria-label="减小"><svg width="5" height="3"><path d="M0 0l2.500 3L5 0z" /></svg></SpinButton>
              </Spinner>
            </Row>
          </ChannelFields>
          <Dial>
            <DialCell $col={2} $row={1}>A</DialCell>
            <DialCell $col={1} $row={2}>D</DialCell>
            <DialCell $col={2} $row={2}>
              <Trace width="34" height="34" viewBox="0 0 34 34" role="img" aria-label="通道旋钮">
                <circle cx="17" cy="17" r="16.500" fill="#b4b4b4" stroke="#808080" />
                <path d="M5 28L29 6a16.500 16.500 0 0 1-24 22z" fill="#808080" />
                <path d="M3 15C5 7 12 3 20 3" fill="none" stroke="#fff" strokeWidth="2.500" />
                <circle cx="18" cy="15" r="6.500" fill="#8c8c8c" />
                <path d="M12 17c2 6 10 6 12-1" fill="none" stroke="#e8e8e8" strokeWidth="1.500" />
                <path d="M8 30c5 4 15 4 20-1l-4-1-7 2-6-2z" fill="#000" />
                <path d="M18.500 22v10" stroke="#fff" strokeWidth="1.500" />
              </Trace>
            </DialCell>
            <DialCell $col={3} $row={2}>B</DialCell>
            <DialCell $col={2} $row={3}>C</DialCell>
          </Dial>
        </ChannelTop>
        <Row $top={15} $gap={4} $left={2}>
          <FlatButton $w={41}>交流</FlatButton>
          <FlatButton $w={32}>0</FlatButton>
          <FlatButton $w={41} $on>直流</FlatButton>
          <FlatButton $w={26}>-</FlatButton>
          <Radios>
            {["A", "B", "C", "D"].map((c) => <Radio key={c} type="radio" name="channel" aria-label={`通道 ${c}`} $dot disabled />)}
          </Radios>
        </Row>
      </Group>
      <Group>
        <Legend>触发</Legend>
        <Row $h={16} $gap={5} $left={7}>
          <FieldLabel as="span">边沿：</FieldLabel>
          <FlatButton $w={36} $h={14} $on aria-label="上升沿">
            <svg width="9" height="9" viewBox="0 0 9 9"><path d="M0 8.500h4.500v-8H9M2 5h5" fill="none" stroke="#000" /></svg>
          </FlatButton>
          <FlatButton $w={36} $h={14} aria-label="下降沿">
            <svg width="9" height="9" viewBox="0 0 9 9"><path d="M0 .5h4.500v8H9M2 4h5" fill="none" stroke="#000" /></svg>
          </FlatButton>
          <Gap $w={32} />
          <RadioLabel>Ext<Radio type="radio" name="trig" /></RadioLabel>
          <Gap $w={13} />
        </Row>
        <Row $top={5} $gap={0} $left={7}>
          <FieldLabel htmlFor="tr-level">水平：</FieldLabel>
          <Field id="tr-level" $w={144} defaultValue="0" />
          <Field aria-label="单位" $w={30} defaultValue=" V" />
          <Gap $w={3} />
        </Row>
        <Row $top={13} $gap={2}>
          <FlatButton $w={48}>单次</FlatButton>
          <FlatButton $w={53}>正常</FlatButton>
          <FlatButton $w={46}>自动</FlatButton>
          <FlatButton $w={45} $on>无</FlatButton>
          <FlatButton $w={41} $on>A &gt;</FlatButton>
          <FlatButton $w={38} disabled>Ext</FlatButton>
        </Row>
      </Group>
    </Groups>
    <CursorMark width="12" height="32" viewBox="0 0 12 32" aria-hidden="true">
      <path d="M0 5c2-4 10-4 12 0-2 2-3 2-6 5-3-3-4-3-6-5z" fill="#7fffd4" fillOpacity="0.8" />
      <path d="M0 30c2-2 3-2 6-5 3 3 4 3 6 5-2 3-10 3-12 0z" fill="#7fffd4" fillOpacity="0.8" />
    </CursorMark>
  </Dialog>
);

/* ---------- bottom ---------- */

const Bottom = styled.section`
  display: flex;
  flex: none;
  height: 179px;
  padding: 2px 4px 0 0;
  border-top: 1px solid #696969;
`;

const BottomSide = styled.div`
  display: flex;
  flex-direction: column;
  align-items: center;
  gap: 1px;
  width: 31px;
  padding: 0 5px 4px 1px;
`;

const VerticalTitle = styled.h2`
  flex: 1;
  width: 25px;
  margin-top: 2px;
  padding-top: 5px;
  padding-left: 9px;
  background: linear-gradient(180deg, #bfcddb, #d7e4f2);
  writing-mode: vertical-rl;
  text-orientation: sideways;
  transform: rotate(180deg);
  font-size: 15px;
  line-height: 15px;
`;

const BottomMain = styled.div`
  display: flex;
  flex-direction: column;
  flex: 1;
  padding-top: 3px;
`;

const LogFrame = styled.div`
  display: flex;
  flex: 1;
  padding: 1px 2px 1px 0;
  border: 1px solid;
  border-color: #fff #696969 #696969 #fff;
`;

const Log = styled.div`
  flex: 1;
  padding: 2px 23px;
  border: 1px solid #828790;
  background: #fff;
  font-size: 15px;
  line-height: 23px;
  white-space: pre;
`;

const StatusBar = styled.footer`
  position: relative;
  display: flex;
  flex: none;
  height: 24px;
  border-top: 1px solid #a0a0a0;
  border-bottom: 2px solid #3c3c3c;
`;

const StatusCell = styled.div<{ $w?: number }>`
  flex: ${(p) => (p.$w ? `0 0 ${p.$w}px` : "1")};
  margin-top: 2px;
  padding: 0 4px;
  border-top: 1px solid #d8d8d8;
  border-right: 1px solid #c8c8c8;
  font-size: 15px;
  line-height: 20px;
  white-space: nowrap;
`;

const DashCell = styled(StatusCell)`
  padding-right: 32px;
  text-align: right;
`;

const Blocks = styled.div`
  height: 14px;
  margin-top: 3px;
  border: 1px solid #c0c0c0;
  background: repeating-linear-gradient(90deg, #e8e8e8 0 6px, #b8b8b8 6px 7px, #f0f0f0 7px 9px);
`;

const Watermark = styled.div`
  position: absolute;
  right: 16px;
  bottom: 4px;
  color: rgba(110, 110, 110, 0.8);
  font-size: 17px;
  line-height: 24px;
  white-space: nowrap;
`;

const MENUS: [string, string][] = [
  ["文件", "F"], ["编辑", "E"], ["视图", "V"], ["绘制", "P"], ["MCU", "M"], ["仿真", "S"],
  ["转移 ", "n"], ["工具", "T"], ["报告", "R"], ["选项", "O"], ["窗口", "W"], ["帮助", "H"],
];

export default function App() {
  return (
    <App_>
      <Global />
      <TitleBar>
        <Caption><Icon name="app" />设计1 - Multisim - [设计1 *]</Caption>
        <CaptionButtons>
          <CaptionButton aria-label="最小化"><svg width="11" height="11"><path d="M0 5.500h11" stroke="#999" /></svg></CaptionButton>
          <CaptionButton aria-label="还原"><svg width="11" height="11"><path d="M.5 2.500h8v8h-8zM2.500 2V.5h8v8H9" stroke="#999" fill="none" /></svg></CaptionButton>
          <CaptionButton aria-label="关闭"><Cross c="#999" /></CaptionButton>
        </CaptionButtons>
      </TitleBar>

      <MenuBar>
        <Icon name="design" />
        <MenuList>
          {MENUS.map(([t, k]) => <MenuItem key={t}>{t}(<u>{k}</u>)</MenuItem>)}
        </MenuList>
        <ChildButtons>
          <BevelButton aria-label="最小化文档"><svg width="9" height="9"><path d="M1 8h6" stroke="#000" strokeWidth="2" /></svg></BevelButton>
          <BevelButton aria-label="还原文档"><svg width="9" height="9"><path d="M.5 4.500h5v4h-5zM2.500 4V1.500h6v4H6M2 1h7M0 4h6" stroke="#000" fill="none" /></svg></BevelButton>
          <BevelButton aria-label="关闭文档"><Cross s={8} w={3} /></BevelButton>
        </ChildButtons>
      </MenuBar>

      <ToolRow>
        <Bar $w={280}>
          <Tools names={["file", "open", "samples", "save", "|", "print", "preview", "|", "cut", "copy", "paste", "|", "undo", "redo"]} />
        </Bar>
        <Gap $w={47} />
        <Bar $w={510}>
          <Tools names={["toolbox", "sheet", "netlist", "grapher", "postproc", "parent", "|", "createComp", "database"]} pressed={["toolbox", "sheet"]} />
          <InUseSelect aria-label="在用列表"><option>--- 在用列表 ---</option></InUseSelect>
          <Divider />
          <Tools names={["erc", "toPcb"]} />
          <CaretButton aria-label="转移选项"><Caret /></CaretButton>
          <Tools names={["backAnn", "fwdAnn"]} />
          <CaretButton aria-label="正向注解选项"><Caret /></CaretButton>
          <Tools names={["|", "find", "help"]} />
        </Bar>
        <Gap $w={441} />
        <Bar $w={124}>
          <Tools names={["zoomIn", "zoomOut", "zoomArea", "zoomFit", "fullScreen"]} />
        </Bar>
      </ToolRow>
      <ToolRow>
        <Bar $w={470}>
          <Tools names={["source", "resistor", "diode", "transistor", "analog", "ttl", "cmos", "miscDig", "mixed", "indicator", "power", "misc", "advanced", "rf", "electroMech", "ni", "connector", "|", "mcu", "|", "hierarchy", "bus"]} />
        </Bar>
        <Gap $w={99} />
        <Bar $w={265}>
          <Tools names={["play", "pause", "stop"]} pressed={["stop"]} />
          <Interactive><Icon name="wrench" />Interactive</Interactive>
        </Bar>
        <Bar $w={190}>
          <Tools names={["probeV", "probeA", "probeW", "probeDiff", "probeAV"]} />
        </Bar>
      </ToolRow>

      <Middle>
        <SidePanel>
          <SideHead>
            <SideTitle>设计工具箱</SideTitle>
            <BevelButton aria-label="收起"><svg width="5" height="3"><path d="M0 3l2.500-3L5 3z" fill="#999" /></svg></BevelButton>
            <BevelButton aria-label="关闭工具箱"><Cross s={6} w={3} /></BevelButton>
          </SideHead>
          <SideBox>
            <SideTools>
              <Tools names={["newDesign", "open", "save", "rename", "text"]} />
              <Gap />
              <Tools names={["history"]} />
            </SideTools>
            <Tree>
              <TreeRow $level={0}>
                <svg width="12" height="10"><path d="M.5.5h8v8h-8zM9 4.500h3" fill="none" stroke="#999" /><path d="M2 4.500h5" stroke="#335599" /></svg>
                <Icon name="project" /><TreeLabel>设计1</TreeLabel>
              </TreeRow>
              <TreeRow $level={1}>
                <svg width="13" height="18"><path d="M5.500 0v9H13" fill="none" stroke="#888" strokeDasharray="1 1" /></svg>
                <Icon name="design" /><TreeLabel $on>设计1</TreeLabel>
              </TreeRow>
            </Tree>
          </SideBox>
          <Tabs><Tab $on>层级</Tab><Tab>可见度</Tab><Tab>项目视图</Tab></Tabs>
        </SidePanel>

        <Workspace>
          <CanvasFrame>
            <Canvas>
              <Gutter $side="left" />
              <Schematic />
              <Gutter $side="right" />
            </Canvas>
            <ScrollTrack>
              <ScrollButton aria-label="向上滚动"><Chevron r={0} /></ScrollButton>
              <ScrollThumb />
              <Gap />
              <ScrollButton aria-label="向下滚动"><Chevron r={180} /></ScrollButton>
            </ScrollTrack>
          </CanvasFrame>
          <DocTabs>
            <DocTab><Icon name="design" />设计1 *</DocTab>
            <CascadeWrap><BevelButton aria-label="层叠窗口" $size={16}><Icon name="cascade" /></BevelButton></CascadeWrap>
          </DocTabs>
        </Workspace>

        <InstrumentBar>
          <BenchButton aria-label="万用表">
            <PixelSvg width="16" height="16" viewBox="0 0 16 16">
              <rect x="4" y="1" width="8" height="13" fill="#fff" stroke="#888" />
              <rect x="5" y="1" width="7" height="4" fill="#00c8d8" />
              <P d="M6 10.500l3-3M6 8h4v3H6z" />
              <P d="M1.500 1v4M14 1v4" c="#ffe800" w={2} />
              <P d="M1.500 5v6l2 3" w={2} />
              <P d="M14.500 5v8l-5 1" c="#ff0000" w={2} />
            </PixelSvg>
          </BenchButton>
          {BENCH.map((b) => <BenchButton key={b.label} aria-label={b.label}><BenchIcon b={b} /></BenchButton>)}
          <BenchRule />
          <BenchButton aria-label="LabVIEW 仪器"><Icon name="labview" /></BenchButton>
          <BenchButton $h={12} aria-label="LabVIEW 菜单"><svg width="4" height="6"><path d="M0 0v6l3-3z" /></svg></BenchButton>
          <BenchRule />
          <BenchButton aria-label="ELVISmx 仪器"><Icon name="component" /></BenchButton>
          <BenchButton $h={12} aria-label="ELVISmx 菜单"><svg width="4" height="6"><path d="M0 0v6l3-3z" fill="#a0a0a0" /></svg></BenchButton>
          <BenchRule />
          <BenchButton aria-label="电流探针"><Icon name="measure" /></BenchButton>
        </InstrumentBar>
      </Middle>

      <Bottom>
        <BottomSide>
          <BevelButton aria-label="关闭表格视图"><Cross s={6} w={3} /></BevelButton>
          <BevelButton aria-label="展开"><svg width="4" height="6"><path d="M0 0v6l3-3z" fill="#999" /></svg></BevelButton>
          <VerticalTitle>电子表格视图</VerticalTitle>
        </BottomSide>
        <BottomMain>
          <LogFrame><Log>Multisim  -  2022年9月3日, 19:11:50</Log></LogFrame>
          <Tabs><Tab $on>结果</Tab><Tab $pad={10}>网络</Tab><Tab>元器件</Tab><Tab>敷铜层</Tab><Tab $pad={12}>仿真</Tab></Tabs>
        </BottomMain>
      </Bottom>
      <StatusBar>
        <DashCell>-</DashCell>
        <StatusCell $w={123} />
        <StatusCell $w={123}>传递: 0.134 s</StatusCell>
        <StatusCell $w={64}><Blocks /></StatusCell>
        <Watermark>CSDN @喂丨金鱼</Watermark>
      </StatusBar>
      <Oscilloscope />
    </App_>
  );
}
